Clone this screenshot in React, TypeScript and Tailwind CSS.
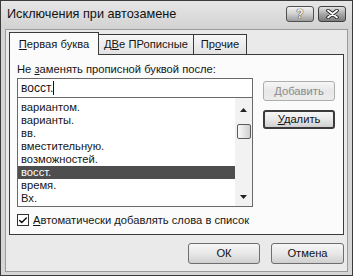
import { Check } from 'lucide-react'

const words = [
  'вариантом.',
  'варианты.',
  'вв.',
  'вместительную.',
  'возможностей.',
  'восст.',
  'время.',
  'Вх.',
]

function Btn({ children, disabled, def }: { children: React.ReactNode; disabled?: boolean; def?: boolean }) {
  return (
    <div
      className={`flex items-center justify-center rounded-[3px] bg-gradient-to-b from-[#f6f6f6] via-[#e8e8e8] to-[#cfcfcf] ${
        def ? 'border-[2px] border-[#3a3a3a]' : disabled ? 'border border-[#adadad]' : 'border border-[#6e6e6e]'
      } ${disabled ? 'text-[#8a8a8a] from-[#f4f4f4] to-[#ececec]' : 'text-[#111]'}`}
    >
      {children}
    </div>
  )
}

export default function App() {
  return (
    <div
      className="w-[353px] h-[276px] flex flex-col bg-[#d6d6d6] border border-[#3c3c3c] text-[11.2px] text-[#151515] overflow-hidden"
      style={{ fontFamily: '"Liberation Sans", Arial, sans-serif' }}
    >
      {/* title bar */}
      <div className="h-[28px] flex items-center pl-[6px] pr-[6px] bg-gradient-to-b from-[#e6e6e6] to-[#d2d2d2]">
        <span className="text-[12.7px] text-[#111]">Исключения при автозамене</span>
        <div className="ml-auto flex gap-[4px] mb-[3px]">
          <div className="w-[28px] h-[16px] rounded-[3px] border border-[#505050] bg-gradient-to-b from-[#f2f2f2] via-[#cfcfcf] to-[#9c9c9c] flex items-center justify-center text-[12px] font-bold leading-none text-[#f8f8f8] [text-shadow:0_0_1px_#222,0_0_1px_#222]">
            ?
          </div>
          <div className="w-[28px] h-[16px] rounded-[3px] border border-[#404040] bg-gradient-to-b from-[#e2e2e2] via-[#a8a8a8] to-[#7a7a7a] flex items-center justify-center">
            <svg width="13" height="10" viewBox="0 0 13 10">
              <path d="M2 1.5 L11 8.5 M11 1.5 L2 8.5" stroke="#2a2a2a" strokeWidth="3.6" strokeLinecap="round" />
              <path d="M2 1.5 L11 8.5 M11 1.5 L2 8.5" stroke="#fafafa" strokeWidth="1.8" strokeLinecap="round" />
            </svg>
          </div>
        </div>
      </div>

      {/* client area */}
      <div className="flex-1 mx-[4px] mb-[3px] bg-[#eaeaea] border border-[#9a9a9a] flex flex-col px-[3px] pt-[2px]">
        {/* tabs */}
        <div className="flex items-end h-[23px] relative z-10">
          <div className="h-[23px] w-[90px] bg-[#fbfbfb] border border-[#3a3a3a] border-b-0 flex items-center justify-center">
            <span><span className="underline">П</span>ервая буква</span>
          </div>
          <div className="h-[21px] w-[95px] bg-gradient-to-b from-[#f8f8f8] to-[#e2e2e2] border border-[#3a3a3a] border-l-0 flex items-center justify-center">
            <span>Д<span className="underline">В</span>е ПРописные</span>
          </div>
          <div className="h-[21px] w-[53px] bg-gradient-to-b from-[#f8f8f8] to-[#e2e2e2] border border-[#3a3a3a] border-l-0 flex items-center justify-center">
            <span>Пр<span className="underline">о</span>чие</span>
          </div>
        </div>

        {/* panel */}
        <div className="-mt-px h-[181px] bg-[#fbfbfb] border border-[#3a3a3a] px-[7px] pt-[6px] flex flex-col">
          <div className="leading-[16px] h-[16px]">
            Не <span className="underline">з</span>аменять прописной буквой после:
          </div>
          <div className="flex gap-[10px] mt-[1px]">
            <div className="w-[236px] flex flex-col">
              <div className="h-[20px] border border-[#6a6a6a] bg-white flex items-center pl-[3px]">
                <span className="text-[12px]">восст.</span>
                <span className="w-px h-[14px] bg-[#111]" />
              </div>
              <div className="h-[109px] border border-[#6a6a6a] border-t-0 bg-white flex">
                <div className="flex-1 pt-[3px]">
                  {words.map((w) => (
                    <div
                      key={w}
                      className={`h-[13px] leading-[13px] pl-[3px] ${w === 'восст.' ? 'bg-[#4e4e4e] text-white' : ''}`}
                    >
                      {w}
                    </div>
                  ))}
                </div>
                <div className="w-[17px] bg-[#f2f2f2] flex flex-col items-center">
                  <svg width="9" height="6" viewBox="0 0 9 6" className="mt-[9px]">
                    <path d="M1 5 L4.5 1 L8 5 Z" fill="#222" />
                  </svg>
                  <div className="mt-[11px] w-[14px] h-[15px] border border-[#5a5a5a] rounded-[2px] bg-gradient-to-r from-[#fafafa] to-[#cfcfcf]" />
                  <svg width="9" height="6" viewBox="0 0 9 6" className="mt-auto mb-[6px]">
                    <path d="M1 1 L4.5 5 L8 1 Z" fill="#222" />
                  </svg>
                </div>
              </div>
            </div>
            <div className="w-[72px] flex flex-col pt-[3px] gap-[9px]">
              <div className="h-[20px] [&>div]:h-full">
                <Btn disabled>Добавить</Btn>
              </div>
              <div className="h-[19px] [&>div]:h-full">
                <Btn def>
                  <span><span className="underline">У</span>далить</span>
                </Btn>
              </div>
            </div>
          </div>
          <div className="flex items-center mt-[5px] gap-[4px]">
            <div className="w-[12px] h-[12px] border border-[#333] bg-white flex items-center justify-center">
              <Check size={11} strokeWidth={3.5} className="text-[#111]" />
            </div>
            <span><span className="underline">А</span>втоматически добавлять слова в список</span>
          </div>
        </div>

        {/* bottom buttons */}
        <div className="flex justify-end gap-[11px] mt-[8px]">
          <div className="w-[72px] h-[21px] [&>div]:h-full">
            <Btn>ОК</Btn>
          </div>
          <div className="w-[73px] h-[21px] [&>div]:h-full">
            <Btn>Отмена</Btn>
          </div>
        </div>
      </div>
    </div>
  )
}
